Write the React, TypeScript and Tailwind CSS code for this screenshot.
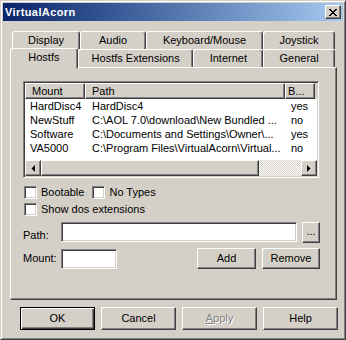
import React from 'react';

const raised =
  'border border-t-white border-l-white border-r-[#404040] border-b-[#404040] shadow-[inset_-1px_-1px_0_#808080]';
const sunken =
  'border border-t-[#808080] border-l-[#808080] border-r-white border-b-white shadow-[inset_1px_1px_0_#404040,inset_-1px_-1px_0_#d4d0c8]';

const rows = [
  { mount: 'HardDisc4', path: 'HardDisc4', boot: 'yes' },
  { mount: 'NewStuff', path: 'C:\\AOL 7.0\\download\\New Bundled ...', boot: 'no' },
  { mount: 'Software', path: 'C:\\Documents and Settings\\Owner\\...', boot: 'yes' },
  { mount: 'VA5000', path: 'C:\\Program Files\\VirtualAcorn\\Virtual...', boot: 'no' },
];

function Tab({ label, w, selected }: { label: string; w: number; selected?: boolean }) {
  return (
    <div
      style={{ width: w }}
      className={`flex items-center justify-center rounded-t-[3px] border-t border-l border-r border-t-white border-l-white border-r-[#404040] bg-[#d4d0c8] shadow-[inset_-1px_0_0_#808080] ${
        selected ? 'relative z-10 -mb-px h-[20px] pb-[2px]' : 'h-[18px]'
      }`}
    >
      {label}
    </div>
  );
}

function Arrow({ dir }: { dir: 'left' | 'right' }) {
  return (
    <svg width="4" height="7" viewBox="0 0 4 7">
      {dir === 'left' ? <polygon points="4,0 4,7 0.5,3.5" fill="#000" /> : <polygon points="0,0 0,7 3.5,3.5" fill="#000" />}
    </svg>
  );
}

function Checkbox({ label }: { label: string }) {
  return (
    <div className="flex items-center gap-[4px]">
      <div className={`h-[13px] w-[13px] bg-white ${sunken}`} />
      <span>{label}</span>
    </div>
  );
}

export default function App() {
  return (
    <div
      className="flex h-[340px] w-[346px] flex-col border border-t-[#d4d0c8] border-l-[#d4d0c8] border-r-[#404040] border-b-[#404040] bg-[#d4d0c8] p-[2px] text-[11px] leading-none text-black shadow-[inset_1px_1px_0_#fff,inset_-1px_-1px_0_#808080]"
      style={{ fontFamily: '"Liberation Sans", Arial, sans-serif' }}
    >
      {/* title bar */}
      <div className="flex h-[18px] items-center justify-between bg-linear-to-r from-[#0a246a] to-[#a6caf0] pl-[2px] pr-[2px]">
        <span className="font-bold tracking-[0.4px] text-white">VirtualAcorn</span>
        <div className={`flex h-[14px] w-[16px] items-center justify-center bg-[#d4d0c8] ${raised}`}>
          <svg width="8" height="7" viewBox="0 0 8 7" shapeRendering="crispEdges">
            <path d="M0 0h2v1h-2zM6 0h2v1h-2zM1 1h2v1h-2zM5 1h2v1h-2zM2 2h4v1h-4zM3 3h2v1h-2zM2 4h4v1h-4zM1 5h2v1h-2zM5 5h2v1h-2zM0 6h2v1h-2zM6 6h2v1h-2z" fill="#000" />
          </svg>
        </div>
      </div>

      <div className="mt-[10px] pl-[7px] pr-[8px]">
        {/* tab rows */}
        <div className="ml-[2px] flex">
          <Tab label="Display" w={68} />
          <Tab label="Audio" w={66} />
          <Tab label="Keyboard/Mouse" w={117} />
          <Tab label="Joystick" w={72} />
        </div>
        <div className="relative z-10 flex h-[18px] items-end">
          <Tab label="Hostfs" w={68} selected />
          <Tab label="Hostfs Extensions" w={116} />
          <Tab label="Internet" w={70} />
          <Tab label="General" w={72} />
        </div>

        {/* panel */}
        <div className="h-[233px] w-[327px] border border-t-white border-l-white border-r-[#404040] border-b-[#404040] pl-[12px] pt-[13px] shadow-[inset_-1px_-1px_0_#808080]">
          {/* list view */}
          <div className={`flex h-[97px] w-[296px] flex-col p-px ${sunken}`}>
            <div className="flex h-[16px] bg-[#d4d0c8]">
              <div className={`flex w-[60px] items-center pl-[6px] ${raised}`}>Mount</div>
              <div className={`flex w-[200px] items-center pl-[6px] ${raised}`}>Path</div>
              <div className={`flex w-[30px] items-center pl-[2px] ${raised}`}>B...</div>
            </div>
            <div className="flex-1 bg-white">
              {rows.map((r) => (
                <div key={r.mount} className="flex h-[14px] items-center">
                  <div className="w-[60px] pl-[5px]">{r.mount}</div>
                  <div className="w-[200px] whitespace-nowrap pl-[7px]">{r.path}</div>
                  <div className="pl-[6px]">{r.boot}</div>
                </div>
              ))}
            </div>
            <div className="flex h-[16px]">
              <div className={`flex w-[16px] items-center justify-center bg-[#d4d0c8] ${raised}`}>
                <Arrow dir="left" />
              </div>
              <div className={`w-[218px] bg-[#d4d0c8] ${raised}`} />
              <div className="flex-1 bg-[repeating-conic-gradient(#d4d0c8_0%_25%,#ffffff_0%_50%)] [background-size:2px_2px]" />
              <div className={`flex w-[16px] items-center justify-center bg-[#d4d0c8] ${raised}`}>
                <Arrow dir="right" />
              </div>
            </div>
          </div>

          {/* options */}
          <div className="ml-px mt-[8px] flex flex-col gap-[4px]">
            <div className="flex gap-[8px]">
              <Checkbox label="Bootable" />
              <Checkbox label="No Types" />
            </div>
            <Checkbox label="Show dos extensions" />
          </div>

          {/* path */}
          <div className="mt-[6px] flex items-start">
            <span className="mt-[8px] w-[38px]">Path:</span>
            <div className={`h-[20px] w-[236px] bg-white ${sunken}`} />
            <div className={`ml-[5px] flex h-[21px] w-[18px] items-center justify-center pb-[3px] ${raised}`}>...</div>
          </div>

          {/* mount */}
          <div className="mt-[5px] flex items-center">
            <span className="w-[38px]">Mount:</span>
            <div className={`h-[20px] w-[56px] bg-white ${sunken}`} />
            <div className={`ml-[80px] flex h-[21px] w-[59px] items-center justify-center ${raised}`}>Add</div>
            <div className={`ml-[6px] flex h-[21px] w-[58px] items-center justify-center ${raised}`}>Remove</div>
          </div>
        </div>
      </div>

      {/* dialog buttons */}
      <div className="ml-[17px] mt-[7px] flex gap-[6px]">
        <div className="flex h-[23px] w-[75px] items-center justify-center border border-black shadow-[inset_1px_1px_0_#fff,inset_-1px_-1px_0_#404040,inset_-2px_-2px_0_#808080]">
          OK
        </div>
        <div className={`flex h-[23px] w-[75px] items-center justify-center ${raised}`}>Cancel</div>
        <div className={`flex h-[23px] w-[75px] items-center justify-center text-[#808080] [text-shadow:1px_1px_0_#fff] ${raised}`}>
          <span className="underline">A</span>pply
        </div>
        <div className={`flex h-[23px] w-[75px] items-center justify-center ${raised}`}>Help</div>
      </div>
    </div>
  );
}
